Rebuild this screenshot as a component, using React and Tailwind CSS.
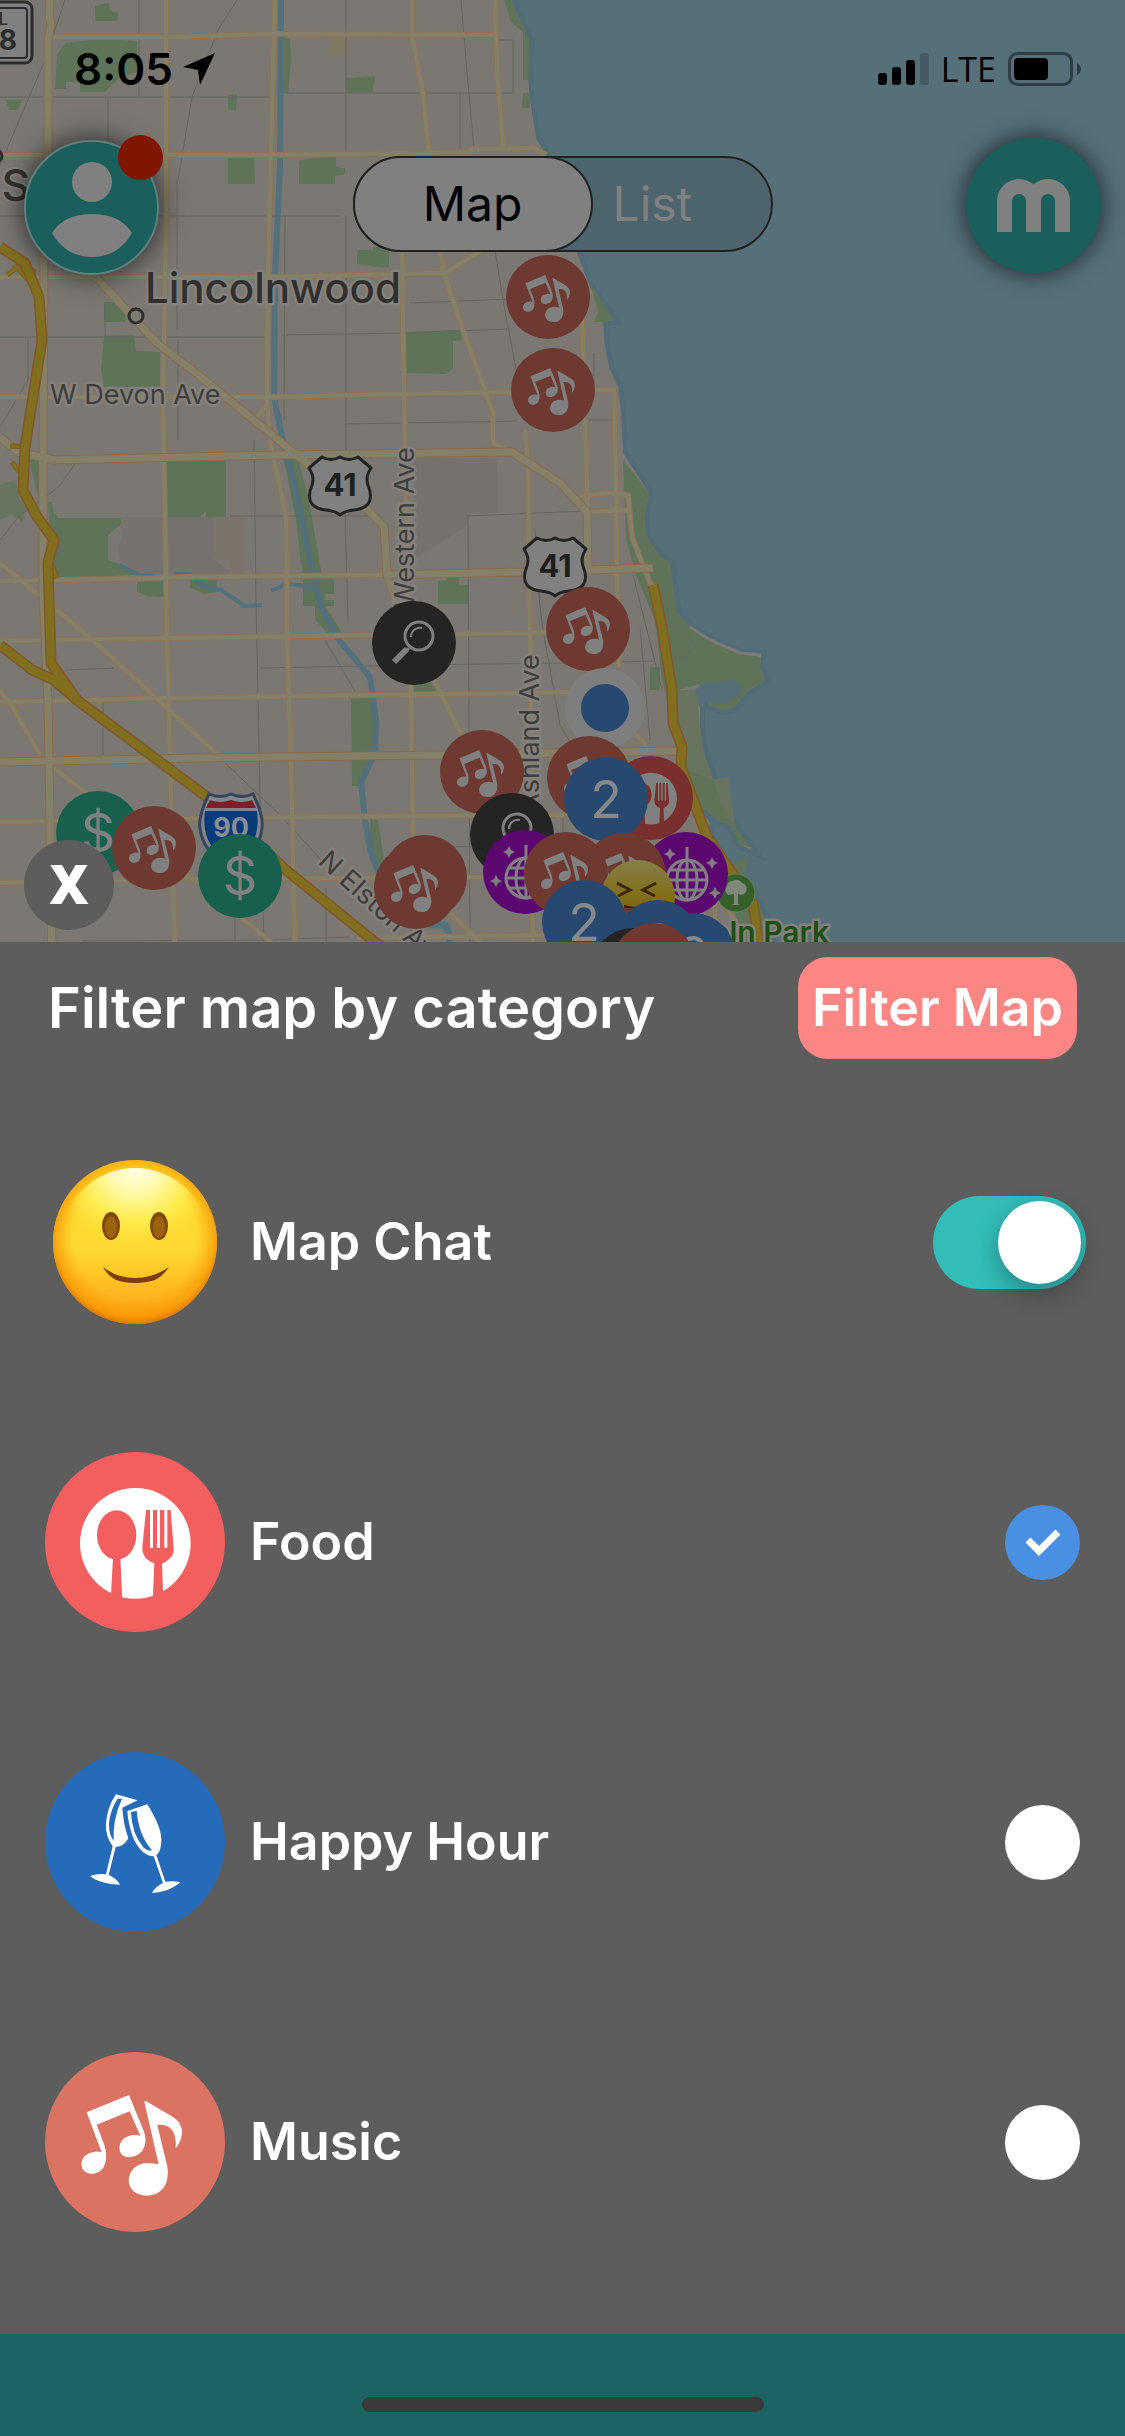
import React, { useState } from "react";

const GREY = "#808080";

/* ---------- category glyphs, drawn on a 540 x 540 grid ---------- */

function MusicGlyph({ fill = "#fff" }) {
  return (
    <g fill={fill}>
      <path d="M260 277L387 225L428 325Q441 355 434 378Q423 409 388 412Q358 410 358 383Q361 350 400 345Q412 344 421 348L389 274L290 314L314 378Q322 405 316 430Q307 459 276 462Q244 460 244 430Q248 400 285 395Q297 394 305 397Z" />
      <path d="M433 245Q436 240 444 247L520 292Q547 310 546 340Q544 365 527 385Q530 340 510 323Q495 312 472 315L502 440Q508 475 492 502Q472 528 440 527Q390 524 386 483Q388 440 432 430Q455 428 476 433Z" />
    </g>
  );
}

function FoodGlyph({ fill = "#fff", ground = "#f35f5f" }) {
  return (
    <g>
      <circle cx="406" cy="370" r="166" fill={fill} />
      <g fill={ground}>
        <ellipse cx="350" cy="345" rx="59" ry="74" />
        <path d="M339 412H361L367 545H332Z" />
        <path d="M438 270H512L521 385Q522 405 508 416Q495 428 486 430L490 545H458L463 430Q445 424 436 412Q426 400 427 380Z" />
      </g>
      <path d="M450 268h9v115h-9zM471 268h9v115h-9zM493 268h9v115h-9z" fill={fill} />
    </g>
  );
}

function GlassesGlyph({ fill = "#fff", ground = "#256bba" }) {
  return (
    <g>
      <path fill={fill} d="M348 223L413 241L367 263Q370 312 385 355Q372 380 347 381L326 465Q350 475 360 494Q330 494 305 486Q280 478 271 468Q290 460 318 463L338 379Q316 350 318 310Q322 260 348 223Z" />
      <path fill={ground} d="M353 236L366 236Q337 300 341 362Q326 345 327 310Q331 268 353 236Z" />
      <path fill={fill} d="M382 273L442 253Q484 320 484 360Q484 395 469 405L496 485Q520 482 541 487Q520 505 495 512Q475 518 456 519Q465 500 489 489L461 409Q425 408 400 355Q384 310 382 273Z" />
      <path fill={ground} d="M393 277L410 272Q416 345 456 391Q445 396 430 382Q395 340 393 277Z" />
    </g>
  );
}

const GLYPHS = { music: MusicGlyph, food: FoodGlyph, glasses: GlassesGlyph };

function CategoryIcon({ kind, color }) {
  const Glyph = GLYPHS[kind];
  return (
    <svg viewBox="135 96 540 540" className="size-[180px]" aria-hidden="true">
      <circle cx="405" cy="366" r="270" fill={color} />
      <Glyph />
    </svg>
  );
}

function SmileIcon() {
  return (
    <svg viewBox="0 0 180 180" className="size-[180px]" aria-hidden="true">
      <defs>
        <linearGradient id="face" x1="0" y1="0" x2="0" y2="1">
          <stop offset="0" stopColor="#ffe030" />
          <stop offset="0.55" stopColor="#ffd932" />
          <stop offset="0.85" stopColor="#feb21c" />
          <stop offset="1" stopColor="#f79b10" />
        </linearGradient>
        <radialGradient id="rim" gradientUnits="userSpaceOnUse" cx="90" cy="86" r="88">
          <stop offset="0.7" stopColor="#fb9d00" stopOpacity="0" />
          <stop offset="0.9" stopColor="#f89500" stopOpacity="0.7" />
          <stop offset="1" stopColor="#cf6c00" />
        </radialGradient>
        <radialGradient id="gloss" gradientUnits="userSpaceOnUse" cx="90" cy="12" r="84">
          <stop offset="0" stopColor="#fffff0" />
          <stop offset="0.35" stopColor="#fffbb0" stopOpacity="0.95" />
          <stop offset="0.7" stopColor="#fff258" stopOpacity="0.7" />
          <stop offset="1" stopColor="#ffe23c" stopOpacity="0" />
        </radialGradient>
      </defs>
      <circle cx="90" cy="90" r="82" fill="url(#face)" />
      <circle cx="90" cy="90" r="82" fill="url(#rim)" />
      <circle cx="90" cy="90" r="74" fill="url(#gloss)" />
      <ellipse cx="66" cy="74" rx="9" ry="14" fill="#80480c" />
      <ellipse cx="114" cy="74" rx="9" ry="14" fill="#80480c" />
      <ellipse cx="66" cy="75" rx="6" ry="11" fill="#9c610c" />
      <ellipse cx="114" cy="75" rx="6" ry="11" fill="#9c610c" />
      <path d="M58 115Q72 126 90 126Q108 126 124 115Q118 124 110 128Q101 131 90 131Q79 131 71 128Q63 124 58 115Z" fill="#7a3e06" />
    </svg>
  );
}

/* ---------- map ---------- */

const MINOR = [
  "M139 0V97", "M0 97H271", "M237 0L218 30L192 97L178 180", "M346 0V153", "M346 215V450", "M461 0L466 60L474 150",
  "M460 94V153", "M513 40V93H288", "M498 40H513", "M0 216H340", "M177 180V330", "M285 216L284 420", "M0 337H267",
  "M282 335L400 333L510 329", "M344 424L517 421", "M108 97V140", "M65 0L45 60L0 165", "M28 338V380L0 427",
  "M105 305V337", "M178 340V440", "M495 250L503 300L520 390", "M410 303L512 299", "M254 440L256 600L260 800L264 942",
  "M345 510L348 620", "M230 516L380 516", "M468 516L560 512L600 511", "M468 514L470 942", "M75 464L60 485L48 495L20 515L0 540",
  "M260 668L420 665L560 663L655 661", "M65 670L114 668", "M325 640L356 693", "M103 700V755", "M225 763L280 815L340 880",
  "M538 590L543 630L560 725L570 742", "M633 575L662 690", "M640 628L650 740", "M594 353V390", "M587 420H612", "M82 941L260 940L350 937",
  "M535 528L540 600", "M420 846L500 847", "M235 880V942", "M326 888V942", "M563 770V860",
];

const PARKS = [
  "M95 6L108 3L112 12H118V21H95Z", "M55 89L57 55L66 43L100 39L137 41V72L118 79L105 92H80V82H66V89Z", "M6 100H22L18 110H9Z",
  "M228 95L237 94L236 111L228 109Z", "M284 37L290 40L291 60L288 94L283 93Z", "M345 78L375 76L373 92L346 93Z",
  "M228 158H254L255 184H228Z", "M299 161L312 158L336 157V167L345 168V174L335 176V184H299Z",
  "M357 250L373 250V247H389V268L370 266L357 264Z", "M104 302H125V322H104Z", "M104 336L134 335L136 351L160 352V387H104L101 370Z",
  "M405 332L462 330V341L453 341L453 368L446 374L405 373Z", "M504 0H512L516 12L525 30L530 43L529 80H523V32L511 22Z",
  "M523 93H530V108H522Z", "M590 283L614 320L603 322H594L598 312Z", "M167 461H226V517H206V511L200 517H167Z",
  "M48 502H52L53 511L58 518L121 518L121 524L108 535V560L118 563L135 575L58 578L52 560Z", "M29 460H39V500Z",
  "M282 450L297 455L309 500L322 577L334 579V594L325 594V600L334 600V606L325 606L342 633L330 636L315 620V606H303V580L296 520Z",
  "M137 582L164 578V597L147 596L137 592Z", "M190 580H217V592L205 594L190 588Z", "M438 581L447 580V577H459V585H468V604H438Z",
  "M351 698H373V745L372 762L358 786H352Z", "M412 682H430L437 692H412Z", "M370 819L378 820L384 860L383 870L371 850Z",
  "M650 667H660V690H650Z",
];

const LAKEFRONT =
  "M623 460L649 493L644 520L647 538L660 557L670 563L673 587L677 613L690 627L710 640L740 653L761 657L760 667L765 680L745 693L735 707L723 710L708 705L709 701L725 704L738 695L742 685L733 680L702 684L680 689L672 720L662 680L655 620L636 575L626 540Z";

const COAST =
  "M0 0H512L514 7L525 30L530 43L527 67L530 100L536 138L546 155L574 245L590 287L614 320L603 322L605 347L609 367L618 387L621 413L623 453L649 493L644 520L647 538L660 557L670 563L673 587L677 613L690 627L710 640L740 653L761 655L760 667L765 680L745 693L735 707L723 710L708 705L709 701L725 704L738 695L742 685L733 680L702 684L695 690L695 697L700 707L700 727L703 750L713 780L723 807L735 827L752 850L740 845L730 823L717 820L707 810L698 807L710 823L708 830L720 860L736 872L753 893L767 923L776 960H0Z";

const STREETS = [
  "M166 0V217L163 400L164 460L167 640L170 753L175 960", "M275 0L271 153L268 277L267 400L271 447L286 517L287 633L291 760L295 960",
  "M412 0V37L423 93L429 153", "M402 253L404 393L405 460L407 570L411 690L412 760L414 960", "M496 0L495 13L498 83L503 147",
  "M441 253L444 273L464 333L486 393L493 413V443L512 452", "M525 430L528 467L530 633L532 773L533 960",
  "M582 320L587 480L587 512", "M594 390H614L616 480L617 570L619 667", "M50 37H167L275 34L496 35",
  "M0 155H271L429 153L471 152V149L534 148L546 155", "M0 277H271L445 273L482 250", "M0 397H271L404 394L512 392",
  "M0 581L164 578L180 577L386 575", "M0 641L168 638L529 633L560 632", "M0 702L170 698L529 693L572 692",
  "M0 822L293 817L560 815L620 813", "M0 883L175 879L486 877L540 876", "M357 938L560 935", "M0 563L96 643L218 755",
  "M0 690L12 706L41 757", "M54 768L112 813", "M175 867L200 884L271 942", "M434 680L464 740", "M387 577L396 607",
  "M450 913L480 942", "M268 403L257 417", "M580 496L607 493L628 495L632 537L650 583L656 590", "M590 512L628 510",
  "M632 730L646 745", "M715 870V942L730 960", "M724 900L740 935",
];

const AVENUES = [
  "M50 0L49 15L51 25L48 40L48 150L44 260L43 460L43 590L48 700L49 760L52 960",
  "M0 437L18 452L54 460L280 455L512 452L560 483L587 512L588 570",
  "M96 277L157 343L196 373L293 452L345 495L368 510L384 527L387 575L525 572L653 568",
  "M0 762L200 758L439 755L680 751",
];

const HIGHWAYS = [
  "M0 247L25 263L39 297L42 340L25 447L23 490L36 515L54 540L48 563L51 663L77 700L207 797L286 870L375 942L400 960",
  "M0 645L32 670L54 680L77 700",
  "M653 585L662 627L672 690L673 723L682 747L681 767L707 837L753 903L761 960",
];

const RAMPS = ["M7 275L25 262M14 265L38 290M22 267L36 272M10 446L30 447M12 462L24 478M50 560L57 578"];

const RIVERS = [
  "M281 0L280 167L275 277L274 397L284 447L291 470L314 577L321 607L339 640L370 677L376 720L375 753L361 783L365 820L371 853L383 885",
];
const CREEKS = ["M119 565L139 575L152 576L164 583L176 574L190 574L203 586L221 590L245 606L262 605", "M271 591L286 584L300 585L314 590"];

function Roads({ paths, casing, fill, wide, narrow }) {
  return (
    <g fill="none" strokeLinejoin="round">
      {paths.map((d) => <path key={d} d={d} stroke={casing} strokeWidth={wide} />)}
      {paths.map((d) => <path key={d + "f"} d={d} stroke={fill} strokeWidth={narrow} />)}
    </g>
  );
}

function MapLabel({ children, size = 27, fill = "#3e3e3c", ...rest }) {
  return (
    <text fontSize={size} fill={fill} stroke="#84817d" strokeWidth="5" strokeLinejoin="round" paintOrder="stroke" {...rest}>
      {children}
    </text>
  );
}

function UsShield({ x, y }) {
  return (
    <g transform={`translate(${x} ${y})`}>
      <path
        d="M-18 -28Q-9 -23 0 -28Q9 -23 18 -28L31 -17Q25 -8 28 0Q33 12 28 19Q24 24 14 25Q4 26 0 30Q-4 26 -14 25Q-24 24 -28 19Q-33 12 -28 0Q-25 -8 -31 -17Z"
        fill="#808080" stroke="#222423" strokeWidth="3" strokeLinejoin="round"
      />
      <text y="11" fontSize="31" fontWeight="700" textAnchor="middle" fill="#1d1f1e">41</text>
    </g>
  );
}

function Pin({ x, y, kind }) {
  const disc = { music: "#6e3931", food: "#7a2f2f", search: "#242424", dollar: "#17604e", disco: "#5c0670", count: "#28496f" }[kind];
  return (
    <g transform={`translate(${x} ${y})`}>
      <circle r="42" fill={disc} />
      {kind === "music" && (
        <svg x="-42" y="-42" width="84" height="84" viewBox="135 96 540 540"><MusicGlyph fill={GREY} /></svg>
      )}
      {kind === "food" && (
        <svg x="-42" y="-42" width="84" height="84" viewBox="135 96 540 540"><FoodGlyph fill={GREY} ground={disc} /></svg>
      )}
      {kind === "search" && (
        <g fill="none" stroke={GREY}>
          <circle cx="5" cy="-7" r="14" strokeWidth="3" />
          <path d="M-3 -6A9 9 0 0 1 8 -15" strokeWidth="2" />
          <path d="M-5 5L-9 9" strokeWidth="3" />
          <path d="M-7 6L-20 19" strokeWidth="6" />
        </g>
      )}
      {kind === "dollar" && (
        <text y="19" fontSize="54" textAnchor="middle" fill={GREY}>$</text>
      )}
      {kind === "disco" && (
        <g fill="none" stroke={GREY} strokeWidth="3">
          <circle cx="1" cy="6" r="20" />
          <ellipse cx="1" cy="6" rx="10" ry="20" />
          <path d="M1 -27V26M-19 6H21M-16 -4H18M-16 16H18" />
          <path fill={GREY} stroke="none" d="M-16 -26l2 4l4 2l-4 2l-2 4l-2 -4l-4 -2l4 -2zM26 -17l2 4l4 2l-4 2l-2 4l-2 -4l-4 -2l4 -2zM29 13l2 4l4 2l-4 2l-2 4l-2 -4l-4 -2l4 -2zM-29 3l2 4l4 2l-4 2l-2 4l-2 -4l-4 -2l4 -2z" />
        </g>
      )}
      {kind === "count" && (
        <text y="19" fontSize="52" textAnchor="middle" fill="#85898e">2</text>
      )}
    </g>
  );
}

const PINS = [
  ["music", 548, 297], ["music", 553, 390], ["search", 414, 643], ["music", 588, 629], ["music", 482, 772],
  ["music", 589, 778], ["food", 651, 798], ["count", 606, 799], ["search", 512, 835], ["disco", 525, 872],
  ["disco", 686, 874], ["music", 624, 875], ["music", 566, 874], ["dollar", 98, 833], ["music", 154, 848],
  ["dollar", 240, 876],
];
const FRONT_PINS = [["count", 658, 942], ["count", 584, 922], ["count", 693, 955], ["search", 633, 970], ["music", 654, 965]];

function CityMap() {
  return (
    <svg
      viewBox="0 0 1125 942" preserveAspectRatio="xMinYMin slice" role="img" aria-label="Map of Chicago's north side"
      className="absolute inset-0 h-full w-full font-['Inter','Noto_Sans',sans-serif]"
    >
      <defs>
        <linearGradient id="laugh" x1="0" y1="0" x2="0" y2="1">
          <stop offset="0" stopColor="#85804a" />
          <stop offset="0.5" stopColor="#826d18" />
          <stop offset="1" stopColor="#7d4f0b" />
        </linearGradient>
        <clipPath id="laughClip"><rect x="595" y="850" width="90" height="58" /></clipPath>
      </defs>
      <rect width="1125" height="960" fill="#56707a" />
      <path d={COAST} fill="#7b7874" stroke="#526c77" strokeWidth="10" />
      <path d={COAST} fill="#7b7874" />
      <path d="M414 458H497L498 513H468V525L414 560Z" fill="#757270" />
      <path d="M121 517H214V560L229 570V575H135L121 563L118 548L122 535Z" fill="#757270" />
      <path d="M214 517H243V575H229V560L214 558Z" fill="#7c736a" />
      <path d="M331 37H346V56L327 57Z" fill="#7f7862" />
      <path d="M678 690L697 690L700 727L703 750L713 780L728 777L735 827L717 820L707 810L698 807L683 770L686 745L676 720Z" fill="#69745f" />
      <path d="M0 485L15 480L20 500L28 505L22 522L12 514L0 520Z" fill="#69745f" />
      <g fill="#5f7358">
        {PARKS.map((d) => <path key={d} d={d} />)}
        <path d={LAKEFRONT} />
        <path d="M685 770L700 775L713 780L723 807L735 827L750 847L740 845L730 823L717 820L707 810L698 807Z" />
        <path d="M722 868L740 860L748 857L745 875L767 923L776 960H735L740 930Z" />
      </g>
      <path d="M695 690L702 684L733 680L742 685L738 695L725 704L709 701L700 707Z" fill="#56707a" />
      <path d="M690 627L710 640L740 653L761 655" fill="none" stroke="#7e7a78" strokeWidth="3" />
      <g fill="none" stroke="#67655f" strokeWidth="1">{MINOR.map((d) => <path key={d} d={d} />)}</g>
      <path d="M668 626L678 627L696 645L684 658L670 658" fill="none" stroke="#6c6662" />
      <g fill="none" stroke="#53707b" strokeLinejoin="round">
        {RIVERS.map((d) => <path key={d} d={d} strokeWidth="6" />)}
        {CREEKS.map((d) => <path key={d} d={d} strokeWidth="4" />)}
        <path d="M428 925H446L450 942" strokeWidth="7" />
      </g>
      <Roads paths={STREETS} casing="#8b7459" fill="#858168" wide="6" narrow="4" />
      <Roads paths={AVENUES} casing="#886b4a" fill="#858168" wide="9" narrow="7" />
      <Roads paths={RAMPS} casing="#7e5a28" fill="#82701e" wide="5" narrow="3" />
      <Roads paths={HIGHWAYS} casing="#80582a" fill="#816e1e" wide="11" narrow="8" />

      <g>
        <rect x="-40" y="2" width="72" height="61" rx="7" fill="#808080" stroke="#2b2d2c" strokeWidth="3" />
        <rect x="-40" y="8" width="67" height="50" rx="3" fill="none" stroke="#2b2d2c" strokeWidth="2" />
        <text x="8" y="25" fontSize="17" fontWeight="500" textAnchor="end" fill="#2b2d2c">IL</text>
        <text x="17" y="50" fontSize="28" fontWeight="700" textAnchor="end" fill="#2b2d2c">58</text>
      </g>
      <circle cx="-4" cy="156" r="6" fill="#777" stroke="#2e2e2d" strokeWidth="3" />
      <MapLabel x="30" y="201" size={44} fontWeight="500" fill="#333332" textAnchor="end">S</MapLabel>
      <circle cx="136" cy="316" r="7" fill="#7d7a76" stroke="#2e2e2d" strokeWidth="3" />
      <MapLabel x="145" y="303" size={42} fontWeight="500" fill="#30302f">Lincolnwood</MapLabel>
      <MapLabel x="50" y="404">W Devon Ave</MapLabel>
      <MapLabel transform="translate(414 608) rotate(-90)">Western Ave</MapLabel>
      <MapLabel transform="translate(539 812) rotate(-90)">Ashland Ave</MapLabel>
      <MapLabel transform="translate(317 863) rotate(42)">N Elston Ave</MapLabel>
      <MapLabel x="829" y="943" size={30} fontWeight="600" fill="#1d4f10" textAnchor="end">Lincoln Park</MapLabel>
      <UsShield x={340} y={485} />
      <UsShield x={555} y={566} />
      <g transform="translate(231 826)">
        <path d="M-22 -32Q-11 -27 0 -32Q11 -27 22 -32Q33 -10 31 2Q28 28 0 40Q-28 28 -31 2Q-33 -10 -22 -32Z" fill="#83868a" stroke="#36445c" strokeWidth="3" />
        <path d="M-21 -26Q-11 -22 0 -26Q11 -22 21 -26L25 -18H-25Z" fill="#7c1f27" />
        <path d="M-26 -15H26Q31 22 0 35Q-31 22 -26 -15Z" fill="#063b7a" />
        <text y="11" fontSize="27" fontWeight="700" textAnchor="middle" fill="#8a8d92">90</text>
      </g>

      <circle cx="736" cy="893" r="19" fill="#35602a" stroke="#6c7f66" strokeWidth="1" />
      <path fill="#7f877c" d="M734 904V894L728 895A6 6 0 0 1 727 886A6 6 0 0 1 733 881A6 6 0 0 1 742 883A6 6 0 0 1 745 893Q743 896 738 894V904L741 905H731Z" />
      {PINS.slice(0, 4).map(([k, x, y]) => <Pin key={`${k}${x}`} kind={k} x={x} y={y} />)}
      <circle cx="605" cy="708" r="40" fill="#7e7e7e" />
      <circle cx="605" cy="708" r="24" fill="#28496f" />
      {PINS.slice(4).map(([k, x, y]) => <Pin key={`${k}${x}`} kind={k} x={x} y={y} />)}
      <circle cx="425" cy="877" r="42" fill="#6e3931" />
      <Pin kind="music" x={416} y={887} />
      <g clipPath="url(#laughClip)">
        <circle cx="638" cy="897" r="37" fill="url(#laugh)" />
        <path d="M617 883L630 890L618 896M656 883L643 890L655 896" fill="none" stroke="#3c2404" strokeWidth="3" />
        <path d="M624 905Q638 909 652 905V910H624Z" fill="#3c2404" />
      </g>
      {FRONT_PINS.map(([k, x, y]) => <Pin key={`${k}${x}`} kind={k} x={x} y={y} />)}
    </svg>
  );
}

/* ---------- header over the map ---------- */

function StatusBar() {
  return (
    <div className="mt-[42px] flex h-[54px] items-center justify-between pr-[44px] pl-[74px] text-black">
      <div className="flex items-center gap-[10px]">
        <span className="text-[44px] leading-none font-semibold">8:05</span>
        <svg viewBox="0 0 32 32" className="size-[32px]" aria-label="Location in use" role="img">
          <path d="M32 0L17 32L15 17L0 14Z" />
        </svg>
      </div>
      <div className="flex items-center gap-3">
        <svg viewBox="0 0 51 32" className="h-[32px] w-[51px]" aria-label="Signal strength" role="img">
          <rect y="20" width="9" height="12" rx="3" />
          <rect x="14" y="14" width="9" height="18" rx="3" />
          <rect x="28" y="7" width="9" height="25" rx="3" />
          <rect x="42" width="9" height="32" rx="3" fill="#455a62" />
        </svg>
        <span className="font-['Open_Sans','Noto_Sans',sans-serif] text-[34px] leading-none font-medium">LTE</span>
        <svg viewBox="0 0 73 34" className="h-[34px] w-[73px]" aria-label="Battery" role="img">
          <rect x="1.5" y="1.5" width="62" height="31" rx="8" fill="none" stroke="#2f3e44" strokeWidth="3" />
          <rect x="6" y="6" width="34" height="22" rx="4" />
          <path d="M69 11Q73 13 73 17Q73 21 69 23Z" fill="#2f3e44" />
        </svg>
      </div>
    </div>
  );
}

function TopNav() {
  return (
    <nav className="mt-10 flex items-start justify-between px-6">
      <button aria-label="Profile" className="relative mt-1 size-[135px] rounded-full border-2 border-[#5e7f7c] bg-[#1b5f5c] shadow-[0_0_24px_4px_rgba(0,0,0,0.55)]">
        <svg viewBox="0 0 80 96" className="mx-auto mt-1 h-[96px] w-[80px]" fill={GREY} aria-hidden="true">
          <circle cx="40" cy="20" r="20" />
          <path d="M0 71Q12 52 40 52Q68 52 80 71Q66 95 40 95Q14 95 0 71Z" />
        </svg>
        <span className="absolute -top-[7px] -right-[6px] size-[45px] rounded-full bg-[#801500]" />
      </button>
      <div className="mt-5 flex h-[96px] items-stretch rounded-full border-2 border-[#222] bg-[#4e646c] text-[48px]">
        <button aria-pressed="true" className="-my-[2px] -ml-[2px] w-[240px] rounded-full border-2 border-[#222] bg-[#808080] text-black">Map</button>
        <button aria-pressed="false" className="w-[178px] pl-5 text-left text-[#808080]">List</button>
      </div>
      <button aria-label="Home" className="mt-[2px] flex size-[135px] items-center justify-center rounded-full bg-[#1b5f5c] shadow-[0_0_20px_4px_rgba(0,0,0,0.5)]">
        <span className="h-[53px] w-[44px] rounded-t-[22px] border-[15px] border-b-0 border-[#808080]" />
        <span className="-ml-[15px] h-[53px] w-[44px] rounded-t-[22px] border-[15px] border-b-0 border-[#808080]" />
      </button>
    </nav>
  );
}

/* ---------- filter panel ---------- */

function Row({ icon, name, children }) {
  return (
    <label className="flex h-[300px] cursor-pointer items-center gap-[25px] pr-[39px] pl-[45px]">
      {icon}
      <span className="flex-1 text-[52px] leading-none font-semibold">{name}</span>
      {children}
    </label>
  );
}

function Switch({ checked, onChange }) {
  return (
    <span className="relative block h-[93px] w-[153px]">
      <input type="checkbox" role="switch" checked={checked} onChange={onChange} className="peer block h-full w-full appearance-none rounded-full bg-[#8a8a8a] checked:bg-[#33bdb9]" />
      <span className="pointer-events-none absolute top-[5px] left-[5px] size-[83px] rounded-full bg-white shadow-[0_9px_24px_rgba(0,0,0,0.3)] peer-checked:left-[65px]" />
    </span>
  );
}

function RoundCheck({ checked, onChange }) {
  return (
    <span className="relative mr-[6px] block size-[75px]">
      <input type="checkbox" checked={checked} onChange={onChange} className="block h-full w-full appearance-none rounded-full bg-white checked:bg-[#4a90e2]" />
      {checked && (
        <svg viewBox="0 0 75 75" className="pointer-events-none absolute inset-0" aria-hidden="true">
          <path d="M23 35L34 46L53 27" fill="none" stroke="#fff" strokeWidth="7" />
        </svg>
      )}
    </span>
  );
}

const CATEGORIES = [
  { name: "Food", kind: "food", color: "#f35f5f" },
  { name: "Happy Hour", kind: "glasses", color: "#256bba" },
  { name: "Music", kind: "music", color: "#da7362" },
];

export default function App() {
  const [chat, setChat] = useState(true);
  const [picked, setPicked] = useState({ Food: true });
  const toggle = (name) => setPicked((p) => ({ ...p, [name]: !p[name] }));

  return (
    <main className="flex min-h-screen flex-col bg-[#5d5d5d] font-['Inter','Noto_Sans',sans-serif] text-white">
      <section className="relative flex min-h-[600px] flex-1 flex-col overflow-hidden">
        <CityMap />
        <div className="relative flex flex-1 flex-col">
          <StatusBar />
          <TopNav />
          <button aria-label="Close filters" className="mt-auto mb-3 ml-6 size-[90px] rounded-full bg-[#5d5d5d] pb-1 font-['Open_Sans','Noto_Sans',sans-serif] text-[54px] leading-none font-extrabold">
            X
          </button>
        </div>
      </section>

      <section className="pb-[42px]">
        <header className="flex h-[150px] items-start justify-between pt-[15px] pr-12 pl-12">
          <h1 className="flex h-[102px] items-center text-[56px] leading-none font-semibold">Filter map by category</h1>
          <button className="h-[102px] w-[279px] rounded-[30px] bg-[#fb8683] text-[52px] leading-none font-semibold whitespace-nowrap">Filter Map</button>
        </header>
        <Row icon={<SmileIcon />} name="Map Chat">
          <Switch checked={chat} onChange={() => setChat(!chat)} />
        </Row>
        {CATEGORIES.map(({ name, kind, color }) => (
          <Row key={name} name={name} icon={<CategoryIcon kind={kind} color={color} />}>
            <RoundCheck checked={!!picked[name]} onChange={() => toggle(name)} />
          </Row>
        ))}
      </section>

      <footer className="flex h-[102px] items-end justify-center bg-[#1c6464] pb-6">
        <div className="h-[15px] w-[402px] rounded-full bg-[#3a3a38]" />
      </footer>
    </main>
  );
}
